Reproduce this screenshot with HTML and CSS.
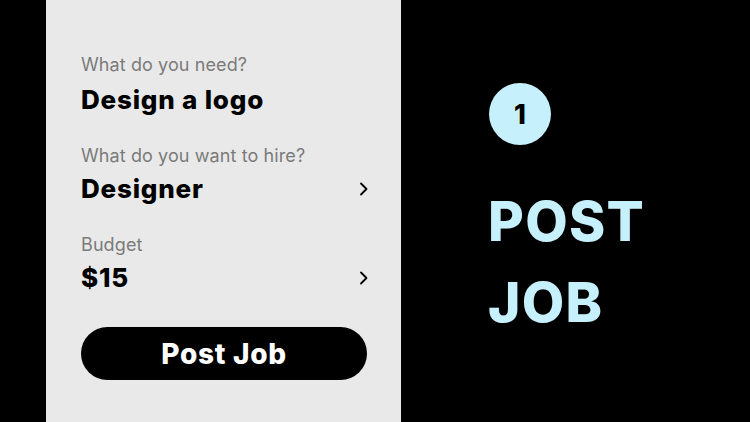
FILE: index.html
```html
<!DOCTYPE html>
<html lang="en">
<head>
    <meta charset="UTF-8">
    <meta name="viewport" content="width=device-width, initial-scale=1.0">
    <title>Post Job</title>
    <link rel="stylesheet" href="styles.css">
</head>
<body>

<div class="screen">
    <div class="panel">
        <div class="field">
            <div class="label">What do you need?</div>
            <div class="value">Design a logo</div>
        </div>
        <div class="field">
            <div class="label">What do you want to hire?</div>
            <div class="value-row">
                <span class="value">Designer</span>
                <svg class="chevron" width="9" height="14" viewBox="0 0 9 14">
                    <path d="M2 1.5 L7.5 7 L2 12.5" fill="none" stroke="#000" stroke-width="1.8" stroke-linecap="round" stroke-linejoin="round"/>
                </svg>
            </div>
        </div>
        <div class="field">
            <div class="label">Budget</div>
            <div class="value-row">
                <span class="value">$15</span>
                <svg class="chevron" width="9" height="14" viewBox="0 0 9 14">
                    <path d="M2 1.5 L7.5 7 L2 12.5" fill="none" stroke="#000" stroke-width="1.8" stroke-linecap="round" stroke-linejoin="round"/>
                </svg>
            </div>
        </div>
        <button class="post-button">Post Job</button>
    </div>

    <div class="step">
        <div class="step-number">1</div>
        <h1 class="step-title">POST<br>JOB</h1>
    </div>
</div>

</body>
</html>
```

FILE: styles.css
```css
body {
    margin: 0;
    padding: 0;
    background-color: #000;
    font-family: Inter, "Noto Sans", sans-serif;
}
.screen {
    display: flex;
    height: 422px;
    overflow: hidden;
}
.panel {
    margin-left: 46px;
    width: 355px;
    box-sizing: border-box;
    padding: 55px 34px 0 35px;
    background-color: #e9e9e9;
    display: flex;
    flex-direction: column;
    gap: 31px;
}
.label {
    font-size: 18px;
    line-height: 20px;
    letter-spacing: 0.1px;
    color: #7b7b7b;
    margin-bottom: 8px;
}
.field:first-child .label {
    margin-bottom: 10px;
}
.value {
    display: block;
    font-size: 26px;
    line-height: 30px;
    font-weight: 800;
    letter-spacing: 0.8px;
    color: #000;
}
.value-row {
    display: flex;
    align-items: center;
    justify-content: space-between;
}
.chevron {
    margin-right: -1px;
}
.post-button {
    height: 53px;
    margin-top: 3px;
    border: none;
    border-radius: 27px;
    background-color: #000;
    color: #fff;
    font-family: Inter, "Noto Sans", sans-serif;
    font-size: 28px;
    font-weight: 800;
    letter-spacing: 0.7px;
    cursor: pointer;
}
.step {
    padding: 83px 0 0 88px;
}
.step-number {
    width: 62px;
    height: 62px;
    border-radius: 50%;
    background-color: #c6f1fc;
    color: #000;
    font-size: 27px;
    font-weight: 800;
    display: flex;
    align-items: center;
    justify-content: center;
}
.step-title {
    margin: 36px 0 0 -1px;
    font-size: 55px;
    line-height: 81px;
    font-weight: 800;
    letter-spacing: 1.3px;
    color: #c6f1fc;
}
```
